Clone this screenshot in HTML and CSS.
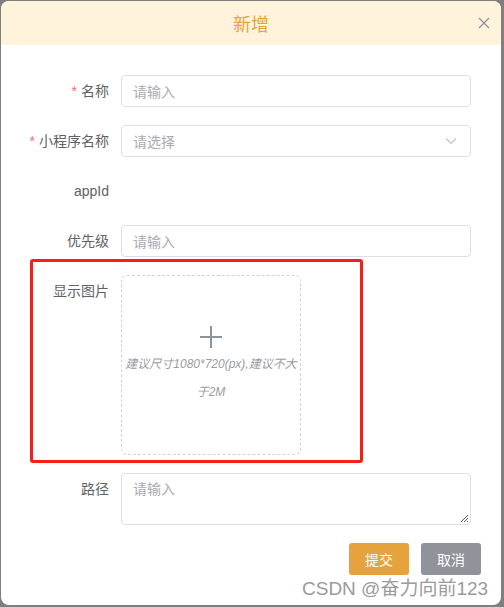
FILE: index.html
```html
<!DOCTYPE html>
<html lang="zh-CN">
<head>
<meta charset="utf-8">
<title>新增</title>
<link rel="stylesheet" href="styles.css">
</head>
<body>
<div class="dialog">
  <div class="dialog-header">
    <span class="dialog-title">新增</span>
    <span class="dialog-close">
      <svg width="12" height="12" viewBox="0 0 12 12"><path d="M1 1L11 11M11 1L1 11" stroke="#909399" stroke-width="1.3" fill="none"/></svg>
    </span>
  </div>
  <div class="dialog-body">
    <form class="form">
      <div class="form-item">
        <label class="form-label"><span class="req">*</span>名称</label>
        <div class="form-content"><div class="input">请输入</div></div>
      </div>
      <div class="form-item">
        <label class="form-label"><span class="req">*</span>小程序名称</label>
        <div class="form-content">
          <div class="input select">
            <span>请选择</span>
            <svg width="12" height="8" viewBox="0 0 12 8"><path d="M1 1.5L6 6.5L11 1.5" stroke="#c0c4cc" stroke-width="1.2" fill="none"/></svg>
          </div>
        </div>
      </div>
      <div class="form-item">
        <label class="form-label">appId</label>
        <div class="form-content"></div>
      </div>
      <div class="form-item">
        <label class="form-label">优先级</label>
        <div class="form-content"><div class="input">请输入</div></div>
      </div>
      <div class="form-item">
        <label class="form-label">显示图片</label>
        <div class="form-content">
          <div class="upload">
            <svg width="22" height="22" viewBox="0 0 22 22"><path d="M11 0V22M0 11H22" stroke="#8c939d" stroke-width="2" fill="none"/></svg>
            <div class="upload-tip">建议尺寸1080*720(px),建议不大于2M</div>
          </div>
        </div>
      </div>
      <div class="form-item">
        <label class="form-label">路径</label>
        <div class="form-content">
          <div class="input textarea">请输入
            <svg class="grip" width="9" height="9" viewBox="0 0 9 9"><path d="M8 1L1 8M8 4L4 8M8 7L7 8" stroke="#555" stroke-width="1" fill="none"/></svg>
          </div>
        </div>
      </div>
    </form>
    <div class="footer">
      <button class="btn btn-warning" type="button">提交</button>
      <button class="btn btn-info" type="button">取消</button>
    </div>
  </div>
  <div class="highlight"></div>
  <div class="watermark">CSDN @奋力向前123</div>
</div>
</body>
</html>
```
FILE: styles.css
```css
html, body {
  margin: 0;
  padding: 0;
}
body {
  background: #7f7f7f;
  width: 504px;
  height: 607px;
  overflow: hidden;
  font-family: "Liberation Sans", "Noto Sans CJK SC", sans-serif;
}
.dialog {
  position: relative;
  margin: 1px 0 0 1px;
  width: 500px;
  height: 604px;
  background: #fff;
  border-radius: 8px;
  overflow: hidden;
  box-sizing: border-box;
}
.dialog-header {
  position: relative;
  height: 44px;
  background: #fff3dc;
  display: flex;
  align-items: center;
  justify-content: center;
}
.dialog-title {
  font-size: 18px;
  color: #e6a23c;
  font-family: "Noto Sans CJK SC", sans-serif;
}
.dialog-close {
  position: absolute;
  right: 11px;
  top: 16px;
  display: flex;
}
.dialog-body {
  padding: 30px 20px 30px 20px;
}
.form {
  padding-right: 10px;
}
.form-item {
  display: flex;
  margin-bottom: 18px;
  min-height: 32px;
}
.form-label {
  width: 100px;
  flex: none;
  box-sizing: border-box;
  padding-right: 12px;
  text-align: right;
  font-size: 14px;
  line-height: 32px;
  color: #606266;
  font-family: "Liberation Sans", "Noto Sans CJK SC", sans-serif;
}
.req {
  color: #f56c6c;
  margin-right: 4px;
}
.form-content {
  flex: 1;
}
.input {
  position: relative;
  height: 32px;
  box-sizing: border-box;
  border: 1px solid #dcdfe6;
  border-radius: 4px;
  padding: 0 11px;
  font-size: 14px;
  line-height: 30px;
  color: #a8abb2;
  font-family: "Noto Sans CJK SC", sans-serif;
}
.select {
  display: flex;
  justify-content: space-between;
  align-items: center;
  padding-right: 13px;
}
.textarea {
  height: 52px;
  line-height: 20px;
  padding-top: 4px;
}
.grip {
  position: absolute;
  right: 1px;
  bottom: 1px;
}
.upload {
  width: 180px;
  height: 180px;
  box-sizing: border-box;
  border: 1px dashed #d0d3d9;
  border-radius: 6px;
  display: flex;
  flex-direction: column;
  align-items: center;
  justify-content: center;
  gap: 2px;
  padding-top: 2px;
}
.upload-tip {
  font-size: 12px;
  line-height: 28px;
  font-style: italic;
  color: #9a9da4;
  text-align: center;
  width: 178px;
  font-family: "Liberation Sans", "Noto Sans CJK SC", sans-serif;
}
.footer {
  display: flex;
  justify-content: flex-end;
  gap: 12px;
}
.btn {
  width: 60px;
  height: 32px;
  border: none;
  border-radius: 3px;
  color: #fff;
  font-size: 14px;
  font-family: "Noto Sans CJK SC", sans-serif;
  padding: 0;
}
.btn-warning {
  background: #e6a23c;
}
.btn-info {
  background: #909399;
}
.highlight {
  position: absolute;
  left: 29px;
  top: 258px;
  width: 333px;
  height: 204px;
  box-sizing: border-box;
  border: 3px solid #f5201a;
  border-radius: 3px;
  pointer-events: none;
}
.watermark {
  position: absolute;
  left: 301px;
  top: 577px;
  font-size: 19px;
  line-height: 22px;
  color: #9b9b9b;
  font-family: "Liberation Sans", "Noto Sans CJK SC", sans-serif;
  text-shadow: 1px 1px 0 #fff;
  white-space: nowrap;
}
```
